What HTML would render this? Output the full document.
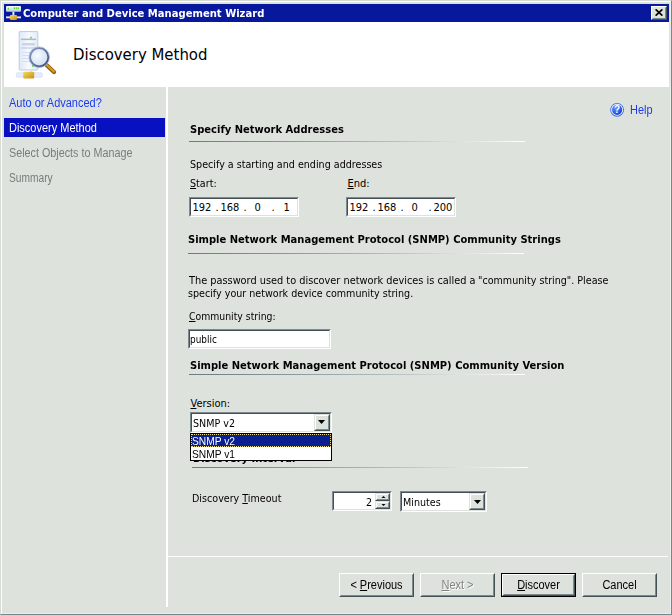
<!DOCTYPE html>
<html><head><meta charset="utf-8"><title>Computer and Device Management Wizard</title>
<style>
html,body{margin:0;padding:0;}
body{width:672px;height:615px;overflow:hidden;background:#dee2dd;position:relative;font-family:"DejaVu Sans Condensed","DejaVu Sans","Liberation Sans",sans-serif;font-size:11px;color:#000;font-stretch:condensed;}
.abs{position:absolute;}
.t{position:absolute;white-space:nowrap;line-height:14px;transform-origin:0 50%;margin-top:1px;transform:scaleX(.967);}
.t.b{transform:scaleX(1.007);}
.b{font-weight:bold;}
.ms{font-family:"Liberation Sans",sans-serif;font-stretch:normal;font-size:12px;transform:scaleX(.915);margin-top:0;}
.ip{transform:none;}
.ip i{position:absolute;font-style:normal;top:0;}
u{text-decoration:underline;text-underline-offset:1px;}
.sep{position:absolute;height:1px;background:linear-gradient(to right,#6c7a82 0%,#8b979d 30%,#b4bdc0 60%,#dfe4e4 82%,#ffffff 100%);}
.sunk{position:absolute;background:#fff;box-sizing:border-box;border:1px solid;border-color:#7c898e #fff #fff #7c898e;}
.sunk:before{content:"";position:absolute;left:0;top:0;right:0;bottom:0;border:1px solid;border-color:#435056 #dee2dd #dee2dd #435056;}
.btn{position:absolute;box-sizing:border-box;background:#dee2dd;border:1px solid;border-color:#fff #435056 #435056 #fff;}
.btn:before{content:"";position:absolute;left:0;top:0;right:0;bottom:0;border:1px solid;border-color:#dee2dd #7c898e #7c898e #dee2dd;}
.btn2{border-color:#dee2dd #435056 #435056 #dee2dd;}
.btn2:before{border-color:#fff #7c898e #7c898e #fff;}
.btn .t{left:0;right:0;text-align:center;top:4px;transform-origin:50% 50%;}
</style></head><body>
<!-- frame -->
<div class="abs" style="left:0;top:0;width:672px;height:615px;box-sizing:border-box;border:1px solid;border-color:#d6dad5 #76868b #76868b #d6dad5;"></div>
<div class="abs" style="left:1px;top:1px;width:670px;height:613px;box-sizing:border-box;border:1px solid;border-color:#fff #eaeeea #eaeeea #fff;"></div>
<!-- title bar -->
<div class="abs" style="left:4px;top:4px;width:665px;height:18px;background:#08189c;"></div>
<svg class="abs" style="left:5px;top:5px" width="18" height="17" viewBox="5 5 18 17">
<defs><linearGradient id="tg" x1="0" y1="0" x2="0" y2="1"><stop offset="0" stop-color="#fafcff"/><stop offset="1" stop-color="#b8c8e0"/></linearGradient>
<linearGradient id="yg" x1="0" y1="0" x2="1" y2="1"><stop offset="0" stop-color="#f8d860"/><stop offset="1" stop-color="#c88c10"/></linearGradient></defs>
<rect x="6" y="6" width="15" height="5.700" rx="1" fill="url(#tg)"/>
<rect x="7.800" y="7.800" width="1" height="1.800" fill="#30d800"/><rect x="13.800" y="7.300" width="1" height="1.800" fill="#30d800"/><rect x="15.800" y="7.300" width="1" height="1.800" fill="#30d800"/><rect x="17.800" y="7.300" width="1" height="1.800" fill="#30d800"/>
<rect x="12.400" y="11.700" width="2" height="4" fill="#e8eef6"/>
<rect x="6" y="16.400" width="15" height="1.900" fill="#dfe7f2"/>
<rect x="10" y="15.100" width="7" height="4.800" rx="0.800" fill="url(#yg)"/>
</svg>
<div class="t b" style="left:23px;top:6px;color:#fff;font-size:11px;transform:scaleX(1.0126);">Computer and Device Management Wizard</div>
<!-- close button -->
<div class="btn" style="left:651px;top:6px;width:16px;height:14px;"></div>
<svg class="abs" style="left:655px;top:9px" width="8" height="7" viewBox="0 0 8 7"><path d="M0.600 0.300L7.400 6.700M7.400 0.300L0.600 6.700" stroke="#000" stroke-width="1.600" fill="none"/></svg>
<!-- header -->
<div class="abs" style="left:4px;top:22px;width:665px;height:65px;background:#fff;"></div>
<svg class="abs" style="left:8px;top:24px" width="60" height="60" viewBox="8 24 60 60">
<defs><linearGradient id="tw" x1="0" y1="0" x2="1" y2="0"><stop offset="0" stop-color="#dfe8f6"/><stop offset="0.500" stop-color="#f6f9fd"/><stop offset="1" stop-color="#e4ecf8"/></linearGradient>
<radialGradient id="gl" cx="0.400" cy="0.400" r="0.700"><stop offset="0" stop-color="#f8fbff"/><stop offset="1" stop-color="#c8daf2"/></radialGradient><linearGradient id="rim" x1="0" y1="0" x2="1" y2="1"><stop offset="0" stop-color="#8c9cc4"/><stop offset="1" stop-color="#38487c"/></linearGradient></defs>
<rect x="19.200" y="31.600" width="18.600" height="38.400" rx="0.500" fill="url(#tw)" stroke="#bccbe6" stroke-width="1"/>
<rect x="21" y="38.600" width="15" height="1.500" fill="#a8b8d0"/>
<rect x="22" y="43" width="13" height="2.500" fill="#c8d6ec"/>
<rect x="21" y="47.500" width="15" height="1" fill="#b4c4dc"/>
<rect x="22" y="52" width="8" height="1" fill="#d4e0f2"/><rect x="22" y="55" width="8" height="1" fill="#d4e0f2"/><rect x="22" y="58" width="8" height="1" fill="#d4e0f2"/><rect x="22" y="61" width="8" height="1" fill="#d4e0f2"/>
<rect x="30.200" y="36.800" width="1.600" height="1.600" fill="#50e020"/>
<rect x="32" y="65" width="2" height="1.800" fill="#50e020"/>
<rect x="30" y="70" width="2" height="3" fill="#dce6f4"/>
<rect x="16.300" y="72.800" width="26" height="4.400" rx="1" fill="#e6eefa" stroke="#ccd8ee" stroke-width="0.600"/>
<rect x="23.200" y="71.800" width="11" height="6.800" rx="1" fill="url(#yg)"/>
<line x1="46" y1="64.500" x2="54" y2="72" stroke="#8a5c08" stroke-width="4.200" stroke-linecap="round"/>
<line x1="46" y1="64.200" x2="54" y2="71.600" stroke="#d49a20" stroke-width="2.200" stroke-linecap="round"/>
<circle cx="39.200" cy="57.200" r="9.200" fill="url(#gl)" stroke="url(#rim)" stroke-width="2"/>
<circle cx="39.200" cy="57.200" r="10.300" fill="none" stroke="#aab8d4" stroke-width="0.800"/>
</svg>
<div class="t" style="left:73px;top:44px;font-size:16.600px;line-height:20px;transform:none;">Discovery Method</div>
<!-- sidebar -->
<div class="abs" style="left:166px;top:87px;width:2px;height:520px;background:#fff;"></div>
<div class="abs" style="left:4px;top:118px;width:161px;height:19px;background:#0810c2;"></div>
<div class="t ms" style="left:9px;top:96px;color:#1a3cf0;">Auto or Advanced?</div>
<div class="t ms" style="left:9px;top:121px;color:#fff;">Discovery Method</div>
<div class="t ms" style="left:9px;top:146px;color:#787c7a;transform:scaleX(.898);">Select Objects to Manage</div>
<div class="t ms" style="left:9px;top:171px;color:#787c7a;transform:scaleX(.85);">Summary</div>
<!-- help -->
<svg class="abs" style="left:609px;top:102px" width="16" height="16" viewBox="0 0 16 16"><defs><radialGradient id="hg" cx="0.350" cy="0.300" r="0.800"><stop offset="0" stop-color="#6a98ff"/><stop offset="1" stop-color="#1038c8"/></radialGradient></defs><circle cx="8.100" cy="7.800" r="6.900" fill="#3868ec"/><circle cx="8.100" cy="7.800" r="6" fill="#f4f8ff"/><circle cx="8.100" cy="7.800" r="5.100" fill="url(#hg)"/><text x="8.100" y="11.300" font-family="Liberation Sans, sans-serif" font-size="10" font-weight="bold" fill="#fff" text-anchor="middle">?</text></svg>
<div class="t ms" style="left:630px;top:103px;color:#1a3cf0;">Help</div>
<!-- content -->
<div class="t b" style="left:190px;top:122px;">Specify Network Addresses</div>
<div class="sep" style="left:189px;top:141px;width:336px;"></div>
<div class="t" style="left:190px;top:157px;">Specify a starting and ending addresses</div>
<div class="t" style="left:190px;top:176px;"><u>S</u>tart:</div>
<div class="t" style="left:347.500px;top:176px;transform:none;"><u>E</u>nd:</div>
<div class="sunk" style="left:189px;top:197px;width:110px;height:20px;"></div>
<div class="t ip" style="left:192.5px;top:200px;">192<i style="left:23px">.</i><i style="left:28px">168</i><i style="left:51px">.</i><i style="left:62px">0</i><i style="left:79px">.</i><i style="left:91px">1</i></div>
<div class="sunk" style="left:346px;top:197px;width:110px;height:20px;"></div>
<div class="t ip" style="left:349.5px;top:200px;">192<i style="left:23px">.</i><i style="left:28px">168</i><i style="left:51px">.</i><i style="left:62px">0</i><i style="left:79px">.</i><i style="left:84px">200</i></div>
<div class="t b" style="left:188px;top:232px;">Simple Network Management Protocol (SNMP) Community Strings</div>
<div class="sep" style="left:188px;top:253px;width:336px;"></div>
<div class="t" style="left:189px;top:273px;transform:scaleX(.987);">The password used to discover network devices is called a</div>
<div class="t" style="left:478px;top:273px;transform:scaleX(.967);">"community string". Please</div>
<div class="t" style="left:188px;top:286px;">specify your network device community string.</div>
<div class="t" style="left:189px;top:309px;transform:scaleX(.94);"><u>C</u>ommunity string:</div>
<div class="sunk" style="left:188px;top:329px;width:143px;height:20px;"></div>
<div class="t" style="left:190px;top:332px;transform:scaleX(.9);">public</div>
<div class="t b" style="left:190px;top:358px;">Simple Network Management Protocol (SNMP) Community Version</div>
<div class="sep" style="left:189px;top:374px;width:336px;"></div>
<div class="t" style="left:190.500px;top:396px;transform:none;"><u>V</u>ersion:</div>
<div class="t b" style="left:193px;top:451px;">Discovery Interval</div>
<div class="sep" style="left:192px;top:467px;width:336px;"></div>
<!-- combobox -->
<div class="sunk" style="left:190px;top:412px;width:142px;height:21px;"></div>
<div class="t" style="left:193px;top:416px;">SNMP v2</div>
<div class="btn btn2" style="left:314px;top:414px;width:16px;height:17px;"></div>
<svg class="abs" style="left:318px;top:420px" width="7" height="4" viewBox="0 0 7 4"><path d="M0 0h7L3.500 4z" fill="#000"/></svg>
<!-- dropdown list -->
<div class="abs" style="left:190px;top:433px;width:142px;height:28px;background:#fff;box-sizing:border-box;border:1px solid #000;"></div>
<div class="abs" style="left:191px;top:434px;width:140px;height:13px;background:#0a2090;box-sizing:border-box;border:1px dotted #e8d890;"></div>
<div class="t ms" style="left:192px;top:434px;color:#fff;font-size:11.500px;transform:scaleX(.89);">SNMP v2</div>
<div class="t ms" style="left:192px;top:447px;font-size:11.500px;transform:scaleX(.89);">SNMP v1</div>
<!-- timeout -->
<div class="t" style="left:192px;top:491px;">Discovery <u>T</u>imeout</div>
<div class="sunk" style="left:332px;top:491px;width:60px;height:20px;"></div>
<div class="t" style="left:365.5px;top:495px;">2</div>
<div class="btn btn2" style="left:375px;top:493px;width:15px;height:8px;"></div>
<div class="btn btn2" style="left:375px;top:501px;width:15px;height:8px;"></div>
<svg class="abs" style="left:381px;top:496px" width="5" height="2" viewBox="0 0 5 2"><path d="M0.500 2h4L2.500 0z" fill="#000"/></svg>
<svg class="abs" style="left:381px;top:503.5px" width="5" height="2" viewBox="0 0 5 2"><path d="M0.500 0h4L2.500 2z" fill="#000"/></svg>
<div class="sunk" style="left:400px;top:491px;width:87px;height:21px;"></div>
<div class="t" style="left:403px;top:495px;">Minutes</div>
<div class="btn btn2" style="left:469px;top:493px;width:16px;height:17px;"></div>
<svg class="abs" style="left:473.500px;top:499.500px" width="7" height="4" viewBox="0 0 7 4"><path d="M0 0h7L3.500 4z" fill="#000"/></svg>
<!-- bottom line -->
<div class="abs" style="left:168px;top:556px;width:500px;height:1px;background:#fff;"></div>
<!-- buttons -->
<div class="btn" style="left:339px;top:573px;width:75px;height:24px;"><div class="t ms">&lt; <u>P</u>revious</div></div>
<div class="btn" style="left:420px;top:573px;width:75px;height:24px;"><div class="t ms" style="color:#808482;text-shadow:1px 1px 0 #fff;"><u>N</u>ext &gt;</div></div>
<div class="abs" style="left:501px;top:573px;width:75px;height:24px;box-sizing:border-box;border:1px solid #000;"></div>
<div class="btn" style="left:502px;top:574px;width:73px;height:22px;"><div class="t ms" style="top:3px"><u>D</u>iscover</div></div>
<div class="btn" style="left:582px;top:573px;width:75px;height:24px;"><div class="t ms">Cancel</div></div>
</body></html>
